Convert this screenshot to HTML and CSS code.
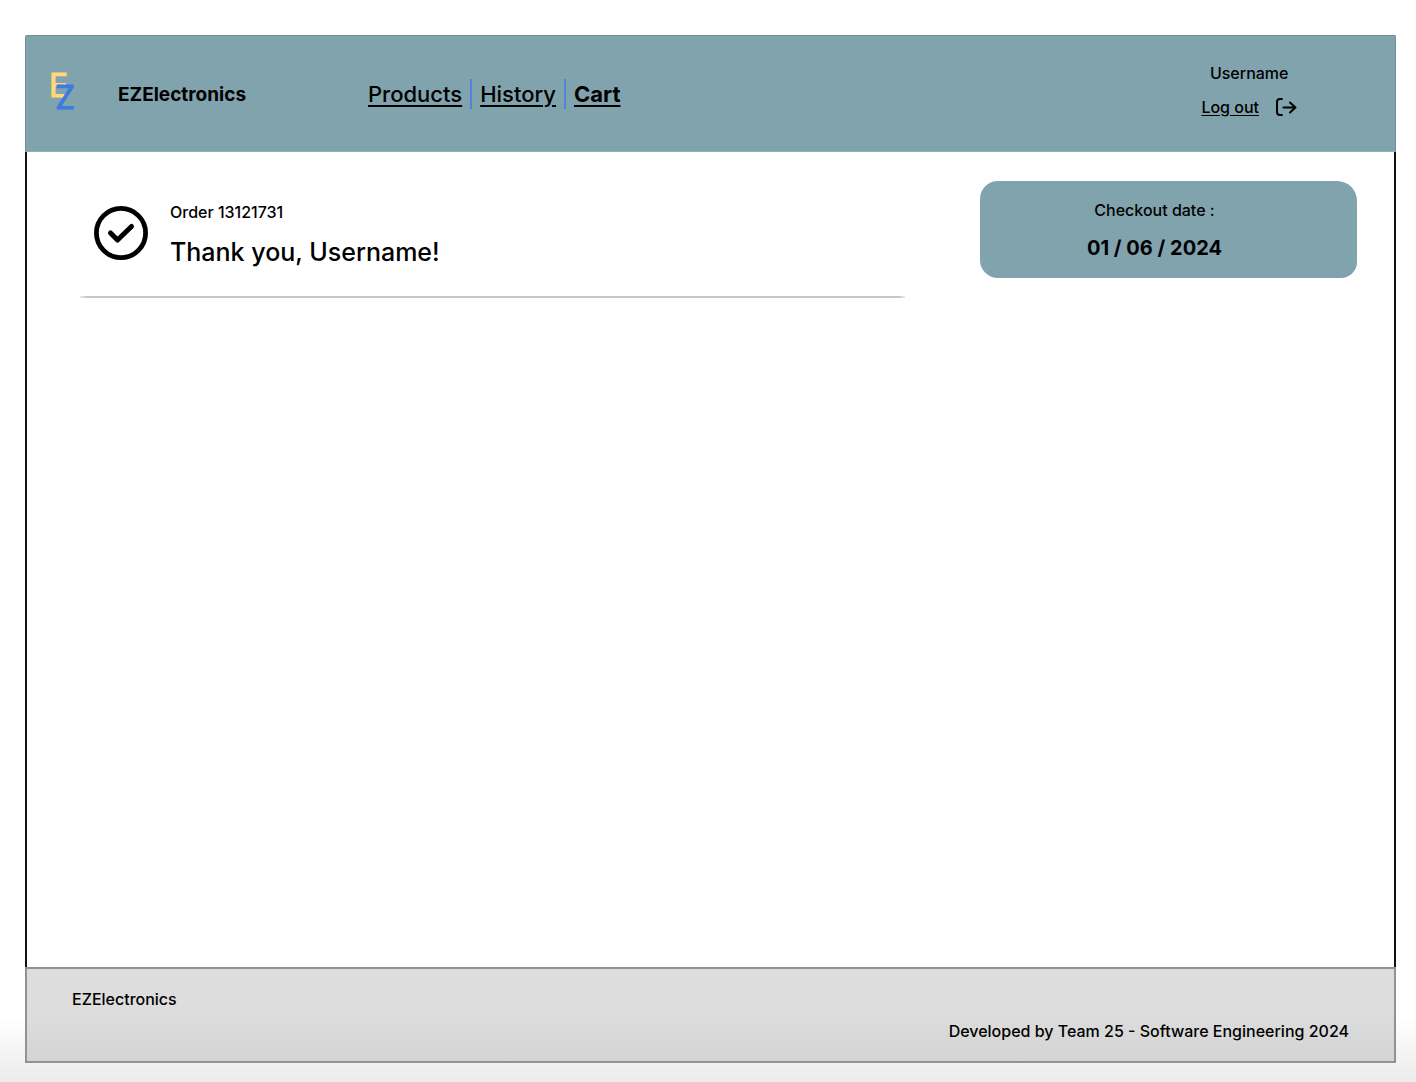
FILE: index.html
```html
<!DOCTYPE html>
<html lang="en">
<head>
<meta charset="utf-8">
<meta name="viewport" content="width=device-width, initial-scale=1">
<title>EZElectronics</title>
<link rel="stylesheet" href="styles.css">
</head>
<body>
<div class="frame">
  <header class="header">
    <div class="brand">
      <svg class="logo" width="28" height="60" viewBox="0 0 28 60" aria-hidden="true">
        <text class="logo-e" x="-1" y="33">E</text>
        <text class="logo-z" x="5" y="45">Z</text>
      </svg>
      <strong class="brand-name">EZElectronics</strong>
    </div>
    <nav class="nav">
      <a class="nav-link" href="#products">Products</a>
      <a class="nav-link" href="#history">History</a>
      <a class="nav-link current" href="#cart" aria-current="page">Cart</a>
    </nav>
    <div class="user">
      <span>Username</span>
      <a class="logout" href="#logout">
        <span class="logout-label">Log out</span>
        <svg width="22" height="20" viewBox="0 0 22 20" fill="none" stroke="#000" stroke-width="2" stroke-linecap="round" stroke-linejoin="round" aria-hidden="true">
          <path d="M7 2H5Q2 2 2 5V15Q2 18 5 18H7M8.500 10.500H20M15 5.500L20.500 10.500L15 15.500"/>
        </svg>
      </a>
    </div>
  </header>
  <main class="main">
    <section class="order">
      <svg width="54" height="54" viewBox="0 0 54 54" fill="none" stroke="#000" stroke-linecap="round" stroke-linejoin="round" aria-hidden="true">
        <circle cx="27" cy="27" r="24.6" stroke-width="4.8"/>
        <path d="M16.5 27L23.5 34L37.5 20.5" stroke-width="5"/>
      </svg>
      <div class="order-text">
        <p class="order-number">Order 13121731</p>
        <h1 class="thanks">Thank you, Username!</h1>
      </div>
    </section>
    <aside class="checkout">
      <span>Checkout date :</span>
      <strong class="date">01 / 06 / 2024</strong>
    </aside>
  </main>
  <footer class="footer">
    <span>EZElectronics</span>
    <span class="credit">Developed by Team 25 - Software Engineering 2024</span>
  </footer>
</div>
</body>
</html>
```
FILE: styles.css
```css
* { box-sizing: border-box; }

body {
  margin: 0;
  min-height: 100vh;
  display: flex;
  padding: 35px 20px 19px 25px;
  font: 500 16px/24px Inter, "Liberation Sans", sans-serif;
  color: #000;
  background: linear-gradient(to top, #ebebeb, #fff 64px);
}

a { color: inherit; }

.frame {
  flex: 1;
  display: flex;
  flex-direction: column;
}

.header {
  display: flex;
  align-items: center;
  min-height: 117px;
  padding: 0 98px 0 24px;
  background: #80a3ad;
  border: 1px solid #6f9099;
  border-bottom-color: #8fb0b8;
  border-radius: 2px 2px 0 0;
}

.brand {
  display: flex;
  align-items: center;
  gap: 40px;
  width: 318px;
}

.brand-name {
  padding-top: 3px;
  font-size: 19px;
}

.logo { overflow: visible; }
.logo text {
  font-size: 32px;
  font-weight: 400;
  stroke-width: 2;
  stroke-linejoin: round;
}
.logo .logo-e { fill: #ffd978; stroke: #ffd978; stroke-width: 1; }
.logo .logo-z { fill: #3d7be0; stroke: #3d7be0; stroke-width: 1; }

.nav { display: flex; }

.nav-link {
  padding: 0 8px;
  font-size: 22px;
  line-height: 30px;
  text-decoration-thickness: 2px;
  text-underline-offset: 3px;
}
.nav-link:first-child { padding-left: 0; }
.nav-link + .nav-link { border-left: 2px solid #4d85da; }
.nav-link.current { font-weight: 700; }

.user {
  display: flex;
  flex-direction: column;
  align-items: center;
  gap: 10px;
  margin: 0 0 8px auto;
}

.logout {
  display: flex;
  align-items: center;
  gap: 16px;
  text-decoration: none;
}

.logout-label {
  text-decoration: underline;
  text-underline-offset: 2px;
}

.main {
  flex: 1;
  display: grid;
  grid-template-columns: 825fr 377fr;
  column-gap: 75px;
  align-items: start;
  padding: 29px 37px 29px 53px;
  background: #fff;
  border: solid #111;
  border-width: 0 2px;
}

.order {
  display: flex;
  align-items: flex-start;
  gap: 22px;
  padding: 25px 14px 28px;
  background: linear-gradient(to right, #eee, #c8c8c8 6px, #c8c8c8 calc(100% - 6px), #eee) bottom / 100% 2px no-repeat;
}

.order-text {
  display: flex;
  flex-direction: column;
  gap: 10px;
  margin-top: -6px;
}

.order-number { margin: 0; }

.thanks {
  margin: 0;
  font-size: 25px;
  line-height: 36px;
  font-weight: 500;
}

.checkout {
  display: flex;
  flex-direction: column;
  align-items: center;
  gap: 14px;
  padding: 17px 28px 18px 0;
  background: #80a3ad;
  border-radius: 18px 20px 16px 18px;
}

.date { font-size: 20px; }

.footer {
  display: flex;
  flex-direction: column;
  gap: 8px;
  min-height: 96px;
  padding: 18px 45px 17px;
  background: linear-gradient(to top, #d4d4d4, #ddd 50px);
  border: 2px solid #929292;
}

.credit { align-self: flex-end; }
```
